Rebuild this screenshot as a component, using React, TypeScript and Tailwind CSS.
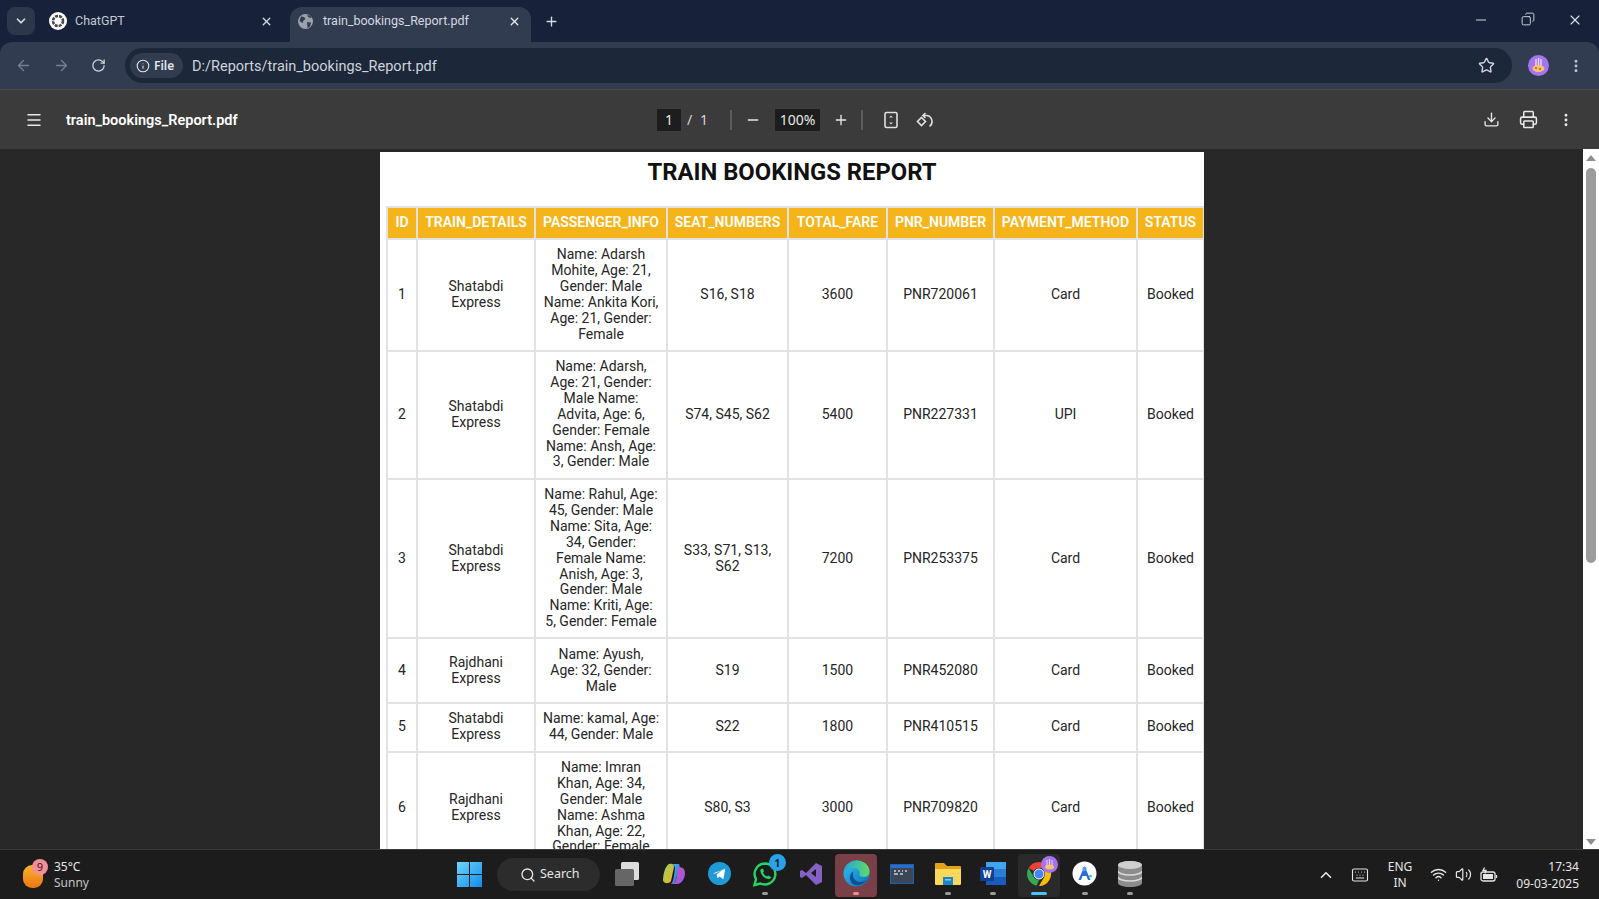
import React from 'react';
import {
  ArrowLeft, ArrowRight, ChevronDown, ChevronUp, Copy, Download, EllipsisVertical, Info, Keyboard, Menu, Minus,
  Plus, Printer, RotateCw, Search, Star, Volume2, Wifi, X,
} from 'lucide-react';

const bookings = [
  { id: 1, train: 'Shatabdi Express', info: 'Name: Adarsh\nMohite, Age: 21,\nGender: Male\nName: Ankita Kori,\nAge: 21, Gender:\nFemale', seats: 'S16, S18', fare: 3600, pnr: 'PNR720061', pay: 'Card' },
  { id: 2, train: 'Shatabdi Express', info: 'Name: Adarsh,\nAge: 21, Gender:\nMale Name:\nAdvita, Age: 6,\nGender: Female\nName: Ansh, Age:\n3, Gender: Male', seats: 'S74, S45, S62', fare: 5400, pnr: 'PNR227331', pay: 'UPI' },
  { id: 3, train: 'Shatabdi Express', info: 'Name: Rahul, Age:\n45, Gender: Male\nName: Sita, Age:\n34, Gender:\nFemale Name:\nAnish, Age: 3,\nGender: Male\nName: Kriti, Age:\n5, Gender: Female', seats: 'S33, S71, S13, S62', fare: 7200, pnr: 'PNR253375', pay: 'Card' },
  { id: 4, train: 'Rajdhani Express', info: 'Name: Ayush,\nAge: 32, Gender:\nMale', seats: 'S19', fare: 1500, pnr: 'PNR452080', pay: 'Card' },
  { id: 5, train: 'Shatabdi Express', info: 'Name: kamal, Age:\n44, Gender: Male', seats: 'S22', fare: 1800, pnr: 'PNR410515', pay: 'Card' },
  { id: 6, train: 'Rajdhani Express', info: 'Name: Imran\nKhan, Age: 34,\nGender: Male\nName: Ashma\nKhan, Age: 22,\nGender: Female', seats: 'S80, S3', fare: 3000, pnr: 'PNR709820', pay: 'Card' },
];

const headers = ['ID', 'TRAIN_DETAILS', 'PASSENGER_INFO', 'SEAT_NUMBERS', 'TOTAL_FARE', 'PNR_NUMBER', 'PAYMENT_METHOD', 'STATUS'];
const colWidths = [30, 118, 132, 121, 99, 107, 143, 67];

const TaskIcon = ({ children, dot, active, open }: { children: React.ReactNode; dot?: string; active?: boolean; open?: boolean }) => (
  <div className="w-[45.7px] flex justify-center shrink-0">
    <div className={`relative w-[42px] h-[43px] mt-[2px] pb-[4px] rounded flex items-center justify-center ${active ? 'bg-[#7a4048]' : open ? 'bg-[#2a2a2a]' : ''}`}>
      {children}
      {dot && <span className={`absolute bottom-[2px] left-1/2 -translate-x-1/2 h-[3px] rounded-full ${dot}`} />}
    </div>
  </div>
);

const Badge = ({ children, className }: { children: React.ReactNode; className: string }) => (
  <span className={`absolute flex items-center justify-center rounded-full text-[10px] leading-none ${className}`}>{children}</span>
);

export default function App() {
  return (
    <div className="w-[1599px] h-[899px] flex flex-col overflow-hidden bg-[#17223a] font-['Noto_Sans',sans-serif]">
      {/* Tab strip */}
      <div className="h-[42px] shrink-0 flex items-end pl-[7px] text-[12.5px] text-[#c4c9d2] font-['Roboto',sans-serif]">
        <div className="w-[28px] h-[28px] mb-[7px] rounded-lg bg-[#2d374b] flex items-center justify-center">
          <ChevronDown size={14} strokeWidth={3} className="text-[#d8dce3]" />
        </div>
        <div className="w-[255px] h-[35px] flex items-center pl-[14px] pr-[17px] pb-[7px]">
          <svg width="18" height="18" viewBox="0 0 18 18" className="shrink-0">
            <circle cx="9" cy="9" r="9" fill="#fff" />
            <circle cx="9" cy="9" r="5" fill="none" stroke="#4a4a4a" strokeWidth="2.6" strokeDasharray="3 1" />
          </svg>
          <span className="ml-[8px] leading-none">ChatGPT</span>
          <X size={13} strokeWidth={2.5} className="ml-auto text-[#d5d8de]" />
        </div>
        <div className="w-[241px] h-[35px] rounded-t-xl bg-[#323c50] flex items-center pl-[8px] pr-[10px] pb-[7px] text-[#d5d9e0]">
          <svg width="15" height="15" viewBox="0 0 15 15" className="shrink-0">
            <circle cx="7.5" cy="7.5" r="7.5" fill="#9aa1ad" />
            <path d="M3 2.5l3 .5 1.500 2-2 1.500-1 2.500-3-2zM9 .8l1 2.200 3 1 .5-1.500zM9 8l4 .5-1 4-2.500 1.500z" fill="#323c50" />
          </svg>
          <span className="ml-[10px] leading-none">train_bookings_Report.pdf</span>
          <X size={13} strokeWidth={2.5} className="ml-auto text-[#e6e8ec]" />
        </div>
        <div className="h-[35px] flex items-center ml-[13px] pb-[7px]">
          <Plus size={15} strokeWidth={2.2} className="text-[#d5d9e0]" />
        </div>
        <div className="ml-auto h-[42px] flex items-start pt-[12px] text-[#dfe2e7]">
          <div className="w-[47px] flex justify-center"><Minus size={16} strokeWidth={1.4} /></div>
          <div className="w-[47px] flex justify-center"><Copy size={14} strokeWidth={1.5} className="scale-x-[-1]" /></div>
          <div className="w-[48px] flex justify-center"><X size={16} strokeWidth={1.6} /></div>
        </div>
      </div>

      {/* Address toolbar */}
      <div className="h-[47px] shrink-0 rounded-t-xl bg-[#323c50] flex items-center text-[#8d95a3]">
        <div className="w-[46px] flex justify-center"><ArrowLeft size={17} strokeWidth={1.8} className="text-[#778091]" /></div>
        <div className="w-[30px] flex justify-center"><ArrowRight size={17} strokeWidth={1.8} className="text-[#778091]" /></div>
        <div className="w-[44px] flex justify-center"><RotateCw size={15} strokeWidth={2} className="text-[#d0d4da]" /></div>
        <div className="ml-[5px] w-[1387px] h-[35px] rounded-full bg-[#1c2739] flex items-center pl-[5px] pr-[17px]">
          <div className="w-[53px] h-[25px] rounded-full bg-[#323c50] flex items-center pl-[6px] text-[#e4e7ec]">
            <Info size={14} strokeWidth={1.8} />
            <span className="ml-[4px] text-[12px] font-semibold leading-none">File</span>
          </div>
          <span className="ml-[9px] mt-[4px] text-[14.5px] text-[#cfd3da] leading-none font-['Roboto',sans-serif]">D:/Reports/train_bookings_Report.pdf</span>
          <Star size={17} strokeWidth={2} className="ml-auto text-[#d0d4da]" />
        </div>
        <div className="ml-[16px] w-[21px] h-[21px] rounded-full bg-[#a574ee] flex items-center justify-center shrink-0">
          <svg width="15" height="15" viewBox="0 0 15 15">
            <path d="M5 1v7M7.5 0v8M10 1v7" stroke="#e9d8ff" strokeWidth="1.4" />
            <ellipse cx="7.5" cy="10.5" rx="6" ry="3.5" fill="#f7c66b" />
            <circle cx="5" cy="10" r="1" fill="#d64a2e" />
            <circle cx="9" cy="11" r="1" fill="#d64a2e" />
          </svg>
        </div>
        <EllipsisVertical size={16} strokeWidth={2.4} className="ml-[19px] text-[#c2c7cf]" />
      </div>

      {/* PDF viewer toolbar */}
      <div className="h-[60px] shrink-0 border-t border-[#484848] bg-[#3b3b3b] flex items-center text-[#e8e8e8]">
        <div className="w-[657px] shrink-0 flex items-center">
          <Menu size={18} strokeWidth={2} className="ml-[25px]" />
          <span className="ml-[23px] mt-[4px] text-[14.5px] font-semibold leading-none text-white font-['Roboto',sans-serif]">train_bookings_Report.pdf</span>
        </div>
        <div className="w-[24px] h-[22px] bg-[#1d1d1d] flex items-center justify-center text-[14px] leading-none">1</div>
        <span className="ml-[4px] w-[9px] text-[14px] leading-none text-center text-[#d5d5d5]">/</span>
        <span className="ml-[6px] w-[10px] text-[14px] leading-none text-[#d5d5d5]">1</span>
        <div className="ml-[20px] w-[2px] h-[20px] bg-[#5c5c5c]" />
        <Minus size={16} strokeWidth={2} className="ml-[13px]" />
        <div className="ml-[14px] w-[45px] h-[22px] bg-[#1d1d1d] flex items-center justify-center text-[14px] leading-none">100%</div>
        <Plus size={16} strokeWidth={2} className="ml-[13px]" />
        <div className="ml-[12px] w-[2px] h-[20px] bg-[#5c5c5c]" />
        <svg width="16" height="18" viewBox="0 0 16 18" fill="none" stroke="#e0e0e0" strokeWidth="1.6" className="ml-[20px]">
          <rect x="2" y="1.5" width="12" height="15" rx="1.5" />
          <path d="M8 4.5l-1.8 2h3.6zM8 13.5l-1.8-2h3.6z" fill="#e0e0e0" stroke="none" />
        </svg>
        <svg width="20" height="18" viewBox="0 0 20 18" fill="none" stroke="#e0e0e0" strokeWidth="1.6" className="ml-[16px]">
          <path d="M6.5 6.5l4 4-4 4-4-4z" />
          <path d="M8 4.5h4a6 6 0 0 1 2.5 10.8M10.5 2l-2.6 2.5 2.6 2.5" />
        </svg>
        <div className="ml-auto flex items-center pr-[25px]">
          <Download size={17} strokeWidth={1.9} />
          <Printer size={19} strokeWidth={1.9} className="ml-[19px]" />
          <EllipsisVertical size={16} strokeWidth={2.4} className="ml-[20px]" />
        </div>
      </div>

      {/* Document area */}
      <div className="flex-1 min-h-0 flex bg-[#282828]">
        <div className="flex-1 min-w-0 overflow-hidden flex justify-center pt-[3px] pl-[1px]">
          <div className="w-[824px] h-[900px] shrink-0 bg-white pl-[6px] overflow-hidden font-['Roboto',sans-serif]">
            <h1 className="h-[41px] mb-[13px] pr-[6px] flex items-center justify-center text-[23.8px] font-bold text-[#111]">TRAIN BOOKINGS REPORT</h1>
            <table className="table-fixed border-collapse w-[818px] text-[14px] leading-[15.85px] text-[#262626] text-center">
              <colgroup>
                {colWidths.map((w, i) => <col key={i} style={{ width: w }} />)}
              </colgroup>
              <thead>
                <tr className="bg-[#f5b41a] text-white">
                  {headers.map(h => (
                    <th key={h} className="border-2 border-[#e2e2e2] py-[7px] font-semibold whitespace-nowrap">{h}</th>
                  ))}
                </tr>
              </thead>
              <tbody>
                {bookings.map(b => (
                  <tr key={b.id}>
                    <td className="border-2 border-[#e2e2e2] px-2 py-[7.5px]">{b.id}</td>
                    <td className="border-2 border-[#e2e2e2] px-2 py-[7.5px]">{b.train}</td>
                    <td className="border-2 border-[#e2e2e2] px-0 py-[7.5px] whitespace-pre">{b.info}</td>
                    <td className="border-2 border-[#e2e2e2] px-2 py-[7.5px]">{b.seats}</td>
                    <td className="border-2 border-[#e2e2e2] px-2 py-[7.5px]">{b.fare}</td>
                    <td className="border-2 border-[#e2e2e2] px-2 py-[7.5px]">{b.pnr}</td>
                    <td className="border-2 border-[#e2e2e2] px-2 py-[7.5px]">{b.pay}</td>
                    <td className="border-2 border-[#e2e2e2] px-2 py-[7.5px]">Booked</td>
                  </tr>
                ))}
              </tbody>
            </table>
          </div>
        </div>
        {/* Scrollbar */}
        <div className="w-[16px] shrink-0 bg-white flex flex-col items-center">
          <svg width="10" height="6" viewBox="0 0 10 6" className="mt-[6px]"><path d="M5 0l5 6H0z" fill="#8f8f8f" /></svg>
          <div className="mt-[7px] w-[10px] h-[395px] rounded-full bg-[#9c9c9c]" />
          <svg width="10" height="6" viewBox="0 0 10 6" className="mt-auto mb-[4px]"><path d="M5 6l5-6H0z" fill="#8f8f8f" /></svg>
        </div>
      </div>

      {/* Windows taskbar */}
      <div className="h-[50px] shrink-0 border-t border-[#3a3a3a] bg-[#1c1c1c] flex items-center text-[#e6e6e6]">
        <div className="w-[446px] shrink-0 flex items-center pl-[23px]">
          <div className="relative w-[20px] h-[24px]">
            <div className="w-[20px] h-[23px] mt-[2px] rounded-[9px] bg-gradient-to-b from-[#f5b52e] to-[#ee7410]" />
            <Badge className="-top-[4px] left-[9px] w-[16px] h-[16px] bg-[#f58f97] text-[#3a1a1a] text-[11px]">9</Badge>
          </div>
          <div className="ml-[11px] text-[12px] leading-[16px]">
            <div>35°C</div>
            <div className="text-[#c4c4c4]">Sunny</div>
          </div>
        </div>
        <div className="w-[46px] flex justify-center shrink-0">
          <svg width="25" height="25" viewBox="0 0 25 25">
            <defs>
              <linearGradient id="win" x1="0" y1="0" x2="1" y2="1">
                <stop offset="0" stopColor="#6fd5fb" />
                <stop offset="1" stopColor="#0f8de8" />
              </linearGradient>
            </defs>
            <path d="M0 0h12v12H0zM13 0h12v12H13zM0 13h12v12H0zM13 13h12v12H13z" fill="url(#win)" />
          </svg>
        </div>
        <div className="ml-[5px] w-[103px] h-[33px] rounded-full bg-[#2c2c2c] flex items-center pl-[23px] shrink-0">
          <Search size={16} strokeWidth={2} />
          <span className="ml-[4px] text-[12.5px] leading-none">Search</span>
        </div>
        <div className="ml-[5px] flex items-center">
          <TaskIcon>
            <svg width="30" height="28" viewBox="0 0 30 28">
              <rect x="8" y="2" width="18" height="18" rx="1.5" fill="#dcdcdc" />
              <rect x="2" y="9" width="19" height="17" rx="1.5" fill="#666" />
            </svg>
          </TaskIcon>
          <TaskIcon>
            <svg width="26" height="26" viewBox="0 0 26 26">
              <defs>
                <linearGradient id="cp1" x1="0" y1="0" x2="1" y2="1"><stop offset="0" stopColor="#3fb8f0" /><stop offset="1" stopColor="#2f6fe0" /></linearGradient>
                <linearGradient id="cp2" x1="0" y1="0" x2="1" y2="1"><stop offset="0" stopColor="#e04fa8" /><stop offset="1" stopColor="#8a5cf0" /></linearGradient>
                <linearGradient id="cp3" x1="0" y1="0" x2="1" y2="1"><stop offset="0" stopColor="#8ed16a" /><stop offset="1" stopColor="#f6b21e" /></linearGradient>
              </defs>
              <path d="M8 3c3-1 5 0 5 3l-3 14c-1 3-8 3-8-1 0-5 2-14 6-16z" fill="url(#cp3)" />
              <path d="M10 3h7c2 0 2 2 1 5l-3 10c-1 3-2 5-5 5 2-2 2-4 3-8l1-8c0-2-2-4-4-4z" fill="url(#cp1)" />
              <path d="M17 6c5 0 7 2 7 6 0 5-3 11-8 11h-6c4 0 5-4 6-8l1-9z" fill="url(#cp2)" />
            </svg>
          </TaskIcon>
          <TaskIcon>
            <svg width="23" height="23" viewBox="0 0 24 24">
              <circle cx="12" cy="12" r="12" fill="#1f9ad6" />
              <path d="M5 12l13-5-2 11-4-3-2 2-1-4 6-5-7 4z" fill="#fff" />
            </svg>
          </TaskIcon>
          <TaskIcon dot="w-[6px] bg-[#9a9a9a]">
            <svg width="26" height="26" viewBox="0 0 26 26" fill="none">
              <path d="M13 2.5a10.5 10.5 0 0 0-9 15.7L2.5 24l5.9-1.5A10.5 10.5 0 1 0 13 2.5z" stroke="#25d366" strokeWidth="2.4" />
              <path d="M9 8c-1 1-1 3 1 6s5 4 7 4c1 0 2-1 2-2l-3-1.500-1 1c-2-1-3-2-4-4l1-1-1-3z" fill="#25d366" />
            </svg>
            <Badge className="top-[0px] right-[0px] w-[17px] h-[17px] bg-[#2aa2e8] text-[#10202c] font-bold">1</Badge>
          </TaskIcon>
          <TaskIcon>
            <svg width="26" height="26" viewBox="0 0 26 26">
              <path d="M18 2l6 3v16l-6 3-10-10-4 3-2-1v-6l2-1 4 3zM18 8l-5 4 5 4z" fill="#8661c5" />
            </svg>
          </TaskIcon>
          <TaskIcon active dot="w-[6px] bg-[#f08a94]">
            <svg width="27" height="27" viewBox="0 0 27 27">
              <defs>
                <linearGradient id="edge1" x1="0" y1="0" x2="1" y2="1"><stop offset="0" stopColor="#35c1f1" /><stop offset="1" stopColor="#0a6fbd" /></linearGradient>
                <linearGradient id="edge2" x1="0" y1="0" x2="1" y2="0"><stop offset="0" stopColor="#1fa6d8" /><stop offset="1" stopColor="#5fdb6a" /></linearGradient>
              </defs>
              <circle cx="13.500" cy="13.500" r="13" fill="url(#edge1)" />
              <path d="M1 11C3 4 9 .5 14 .5c7 0 12.500 5 12.500 11 0 4-3 5.500-6 5.500-3 0-4-1-4-2 1-3-1-7-5-7-4 0-8 1-10.500 3z" fill="url(#edge2)" />
              <path d="M11 11c-3 4 0 11 6 11 3 0 6-1 8-4-3 6-9 8-13 7-6-2-7-11-1-14z" fill="#0f4f8f" />
            </svg>
          </TaskIcon>
          <TaskIcon>
            <svg width="24" height="20" viewBox="0 0 24 20">
              <rect x="0.500" y="0.500" width="23" height="19" fill="#3d4654" stroke="#1d5fb5" />
              <rect x="1" y="1" width="22" height="3" fill="#2a6fc5" />
              <path d="M4 7h2M8 7h2M12 7h1M15 7h2M4 10h4M10 10h3" stroke="#c9d3e0" strokeWidth="1.3" />
            </svg>
          </TaskIcon>
          <TaskIcon dot="w-[6px] bg-[#9a9a9a]">
            <svg width="26" height="24" viewBox="0 0 26 24">
              <path d="M0 2a1 1 0 0 1 1-1h8l3 3h13a1 1 0 0 1 1 1v4H0z" fill="#e3a21a" />
              <path d="M0 7h26v15a1 1 0 0 1-1 1H1a1 1 0 0 1-1-1z" fill="#fbd75b" />
              <rect x="8" y="15" width="10" height="8" fill="#1a86c8" />
              <rect x="10" y="17" width="6" height="1.500" fill="#7cc8ec" />
            </svg>
          </TaskIcon>
          <TaskIcon dot="w-[6px] bg-[#9a9a9a]">
            <svg width="26" height="25" viewBox="0 0 26 25">
              <rect x="6" y="1" width="20" height="7" fill="#41a5ee" />
              <rect x="6" y="8" width="20" height="8" fill="#2b7cd3" />
              <rect x="6" y="16" width="20" height="8" fill="#185abd" />
              <rect x="0" y="6" width="14" height="14" rx="1" fill="#103f91" />
              <text x="7" y="17" textAnchor="middle" fontSize="10" fontWeight="700" fill="#fff" fontFamily="Roboto, sans-serif">W</text>
            </svg>
          </TaskIcon>
          <TaskIcon open dot="w-[16px] bg-[#4cc2ff]">
            <svg width="26" height="26" viewBox="0 0 26 26">
              <path d="M13 1a12 12 0 0 1 10.400 6H13a6 6 0 0 0-5.200 3L2.600 7A12 12 0 0 1 13 1z" fill="#ea4335" />
              <path d="M23.400 7A12 12 0 0 1 13 25l5.200-9A6 6 0 0 0 18.200 10z" fill="#fbbc04" />
              <path d="M2.600 7l5.200 9A6 6 0 0 0 13 19l-2.500 5.700A12 12 0 0 1 2.600 7z" fill="#34a853" />
              <circle cx="13" cy="13" r="5" fill="#4285f4" stroke="#fff" strokeWidth="1" />
            </svg>
            <span className="absolute top-[2px] right-[2px] w-[17px] h-[17px] rounded-full bg-[#a574ee] flex items-center justify-center">
              <svg width="11" height="11" viewBox="0 0 11 11">
                <path d="M3 1v5M5.500 0v6M8 1v5" stroke="#e9d8ff" strokeWidth="1" />
                <ellipse cx="5.500" cy="8" rx="4.500" ry="2.500" fill="#f7c66b" />
              </svg>
            </span>
          </TaskIcon>
          <TaskIcon dot="w-[6px] bg-[#9a9a9a]">
            <svg width="25" height="25" viewBox="0 0 25 25">
              <circle cx="12.500" cy="12.500" r="12" fill="#fff" />
              <path d="M12.500 5l-6 14h2.500l1.500-4h4l1.500 4h2.500z" fill="#2a6fd8" />
              <circle cx="12.500" cy="8" r="2.200" fill="#5a9af0" />
              <circle cx="18.500" cy="15" r="1.500" fill="#3ddc84" />
            </svg>
          </TaskIcon>
          <TaskIcon dot="w-[6px] bg-[#9a9a9a]">
            <svg width="24" height="28" viewBox="0 0 24 28">
              <path d="M0 5c0-2 5-4 12-4s12 2 12 4v18c0 2-5 4-12 4S0 25 0 23z" fill="#8c8c8c" />
              <ellipse cx="12" cy="5" rx="12" ry="4" fill="#cfcfcf" />
              <path d="M0 11c0 2 5 4 12 4s12-2 12-4M0 17c0 2 5 4 12 4s12-2 12-4" fill="none" stroke="#dcdcdc" strokeWidth="1.400" />
            </svg>
          </TaskIcon>
        </div>
        <div className="ml-auto flex items-center pr-[20px]">
          <ChevronUp size={18} strokeWidth={2.2} />
          <Keyboard size={18} strokeWidth={1.5} className="ml-[16px]" />
          <div className="ml-[16px] w-[30px] text-center text-[12px] leading-[16px]">
            <div>ENG</div>
            <div>IN</div>
          </div>
          <Wifi size={17} strokeWidth={2} className="ml-[15px]" />
          <Volume2 size={17} strokeWidth={1.7} className="ml-[8px]" />
          <svg width="18" height="16" viewBox="0 0 18 16" fill="none" stroke="#e6e6e6" strokeWidth="1.3" className="ml-[8px]">
            <rect x="1" y="5" width="14" height="9" rx="2" />
            <rect x="3" y="7" width="10" height="5" fill="#e6e6e6" stroke="none" />
            <path d="M16.500 8v3M4.500 .5l-1.500 3h3l-1 3" />
          </svg>
          <div className="ml-[17px] w-[64px] text-right text-[12px] leading-[17px]">
            <div>17:34</div>
            <div>09-03-2025</div>
          </div>
        </div>
      </div>
    </div>
  );
}
